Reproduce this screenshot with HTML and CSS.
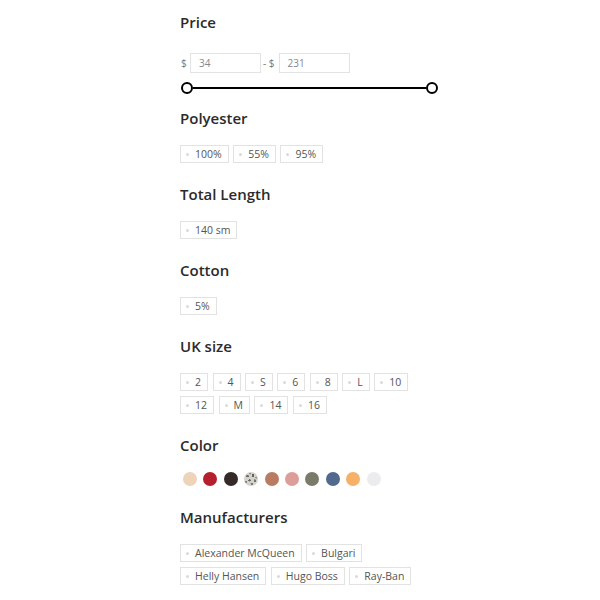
FILE: index.html
```html
<!DOCTYPE html>
<html>
<head>
<meta charset="utf-8">
<link rel="stylesheet" href="styles.css">
</head>
<body>
<div class="filters">
  <section class="group price">
    <h3 class="title">Price</h3>
    <div class="price-inputs">
      <span class="cur">$</span>
      <span class="box">34</span>
      <span class="cur sep">- $</span>
      <span class="box">231</span>
    </div>
    <div class="slider">
      <span class="handle"></span>
      <span class="track"></span>
      <span class="handle"></span>
    </div>
  </section>

  <section class="group">
    <h3 class="title">Polyester</h3>
    <div class="chips">
      <span class="chip">100%</span>
      <span class="chip">55%</span>
      <span class="chip">95%</span>
    </div>
  </section>

  <section class="group">
    <h3 class="title">Total Length</h3>
    <div class="chips">
      <span class="chip">140 sm</span>
    </div>
  </section>

  <section class="group">
    <h3 class="title">Cotton</h3>
    <div class="chips">
      <span class="chip">5%</span>
    </div>
  </section>

  <section class="group">
    <h3 class="title">UK size</h3>
    <div class="chips">
      <span class="chip">2</span>
      <span class="chip">4</span>
      <span class="chip">S</span>
      <span class="chip">6</span>
      <span class="chip">8</span>
      <span class="chip">L</span>
      <span class="chip">10</span>
      <span class="chip">12</span>
      <span class="chip">M</span>
      <span class="chip">14</span>
      <span class="chip">16</span>
    </div>
  </section>

  <section class="group color">
    <h3 class="title">Color</h3>
    <div class="swatches">
      <span class="sw beige"></span>
      <span class="sw red"></span>
      <span class="sw dark"></span>
      <span class="sw leopard"></span>
      <span class="sw brown"></span>
      <span class="sw pink"></span>
      <span class="sw olive"></span>
      <span class="sw blue"></span>
      <span class="sw orange"></span>
      <span class="sw white"></span>
    </div>
  </section>

  <section class="group">
    <h3 class="title">Manufacturers</h3>
    <div class="chips">
      <span class="chip">Alexander McQueen</span>
      <span class="chip">Bulgari</span>
      <span class="chip">Helly Hansen</span>
      <span class="chip">Hugo Boss</span>
      <span class="chip">Ray-Ban</span>
    </div>
  </section>
</div>
</body>
</html>
```

FILE: styles.css
```css
html, body {
  margin: 0;
  padding: 0;
  background: #ffffff;
}
body {
  font-family: "Open Sans", "Liberation Sans", sans-serif;
  color: #222;
}
.filters {
  padding: 12px 0 0 180px;
  width: 280px;
}
.group {
  margin-bottom: 21px;
}
.price {
  margin-bottom: 14px;
}
.title {
  margin: 0;
  font-size: 15px;
  line-height: 20px;
  font-weight: 600;
  color: #2b2b2b;
}
.price-inputs {
  margin-top: 21px;
  display: flex;
  align-items: center;
  height: 20px;
}
.cur {
  font-size: 10px;
  color: #777;
  width: 9px;
  padding-left: 1px;
}
.cur.sep {
  width: auto;
  padding: 0 4px 0 2px;
}
.box {
  box-sizing: border-box;
  width: 71px;
  height: 20px;
  border: 1px solid #e3e3e3;
  font-size: 10px;
  line-height: 18px;
  color: #888;
  padding-left: 8px;
}
.slider {
  margin-top: 9px;
  margin-left: 1px;
  display: flex;
  align-items: center;
  height: 12px;
}
.track {
  flex: 0 0 233px;
  height: 2px;
  background: #000;
}
.handle {
  flex: 0 0 12px;
  box-sizing: border-box;
  width: 12px;
  height: 12px;
  border: 2px solid #000;
  border-radius: 50%;
  background: #fff;
}
.chips {
  margin-top: 17px;
  display: flex;
  flex-wrap: wrap;
  gap: 5px 4.5px;
  width: 250px;
}
.chip {
  box-sizing: border-box;
  height: 18px;
  display: inline-flex;
  align-items: center;
  border: 1px solid #e2e2e2;
  padding: 0 6px 0 5px;
  font-size: 10.5px;
  color: #555;
}
.chip::before {
  content: "";
  width: 3px;
  height: 3px;
  border-radius: 50%;
  background: #dadada;
  margin-right: 6px;
}
.swatches {
  margin-top: 17px;
  display: flex;
  gap: 6.4px;
  padding-left: 3px;
}
.sw {
  width: 14px;
  height: 14px;
  border-radius: 50%;
}
.beige { background: #edd3b8; }
.red { background: #b4202d; }
.dark { background: #342b28; }
.leopard {
  background:
    radial-gradient(ellipse 1.6px 1.1px at 25% 30%, #6a6862 80%, transparent 100%),
    radial-gradient(ellipse 1.2px 1.6px at 65% 25%, #65635e 80%, transparent 100%),
    radial-gradient(ellipse 1.6px 1.2px at 40% 60%, #6e6c66 80%, transparent 100%),
    radial-gradient(ellipse 1.2px 1.5px at 78% 62%, #75736d 80%, transparent 100%),
    radial-gradient(ellipse 1.4px 1px at 55% 85%, #7b7973 80%, transparent 100%),
    radial-gradient(ellipse 1px 1.1px at 15% 70%, #85837d 80%, transparent 100%),
    radial-gradient(ellipse 1px 1px at 88% 40%, #8c8a84 80%, transparent 100%),
    radial-gradient(ellipse 1px 0.9px at 45% 12%, #8c8a84 80%, transparent 100%),
    #d4d2cc;
}
.brown { background: #b97b62; }
.pink { background: #dd9e99; }
.olive { background: #7c7b69; }
.blue { background: #50698c; }
.orange { background: #f6b067; }
.white { background: #ececee; }
```
